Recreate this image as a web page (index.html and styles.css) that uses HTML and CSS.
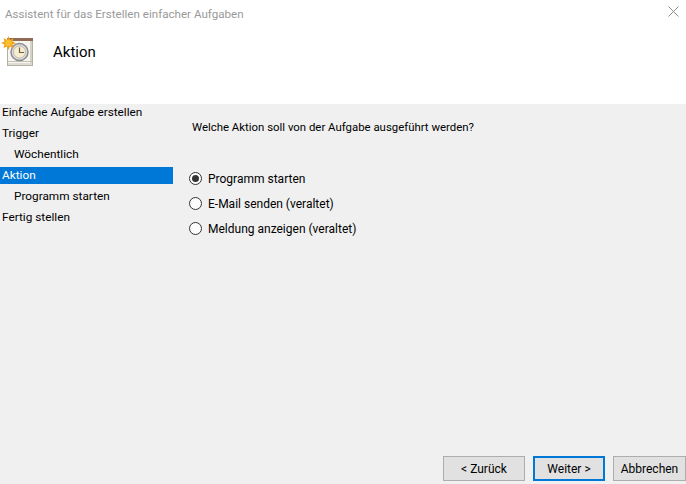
FILE: index.html
```html
<!DOCTYPE html>
<html lang="de">
<head>
    <meta charset="UTF-8">
    <title>Assistent für das Erstellen einfacher Aufgaben</title>
    <link rel="stylesheet" href="styles.css">
</head>
<body>
    <div class="wizard">
        <header class="wizard-header">
            <div class="title-bar">
                <span class="title-text">Assistent für das Erstellen einfacher Aufgaben</span>
                <svg class="close-icon" width="11" height="11" viewBox="0 0 11 11">
                    <path d="M0.5 0.5L10.5 10.5M10.5 0.5L0.5 10.5" stroke="#8c8c8c" stroke-width="1" fill="none"/>
                </svg>
            </div>
            <div class="page-heading">
                <svg class="task-icon" width="34" height="32" viewBox="0 0 34 32">
                    <!-- calendar page -->
                    <rect x="7.5" y="2.5" width="25" height="27" fill="#f7f5f0" stroke="#b5b0a4"/>
                    <rect x="7" y="2" width="26" height="3" fill="#8f6b57"/>
                    <rect x="30" y="5" width="2" height="24" fill="#d6d2c8"/>
                    <rect x="8" y="25" width="24" height="1" fill="#c4c0b6"/>
                    <rect x="8" y="27" width="24" height="2" fill="#dedbd3"/>
                    <!-- clock -->
                    <circle cx="19.5" cy="16" r="8.5" fill="#dcdcdc" stroke="#8d8d8d" stroke-width="1.5"/>
                    <circle cx="19.5" cy="16" r="6" fill="#f8eecb" stroke="#a5a5a5" stroke-width="0.6"/>
                    <path d="M19.5 11.5V16.5H24" stroke="#66625a" stroke-width="1.2" fill="none"/>
                    <!-- sun -->
                    <path d="M8.5 0L10 4L13.5 2L12.5 5.5L16 7L12.5 8.5L13.5 12L10 10.5L8.5 14L7 10.5L3.5 12L4.5 8.5L1 7L4.5 5.5L3.5 2L7 4Z" fill="#f3a01a"/>
                    <circle cx="8.5" cy="7" r="3.2" fill="#fbc02d"/>
                </svg>
                <h1 class="page-title">Aktion</h1>
            </div>
        </header>

        <div class="wizard-body">
            <nav class="step-list">
                <div class="step">Einfache Aufgabe erstellen</div>
                <div class="step">Trigger</div>
                <div class="step sub">Wöchentlich</div>
                <div class="step active">Aktion</div>
                <div class="step sub">Programm starten</div>
                <div class="step">Fertig stellen</div>
            </nav>
            <main class="step-content">
                <p class="question">Welche Aktion soll von der Aufgabe ausgeführt werden?</p>
                <div class="radio-group">
                    <label class="radio-row"><span class="radio checked"></span>Programm starten</label>
                    <label class="radio-row"><span class="radio"></span>E-Mail senden (veraltet)</label>
                    <label class="radio-row"><span class="radio"></span>Meldung anzeigen (veraltet)</label>
                </div>
            </main>
        </div>

        <footer class="wizard-footer">
            <button class="btn btn-back">&lt; Zurück</button>
            <button class="btn btn-next">Weiter &gt;</button>
            <button class="btn btn-cancel">Abbrechen</button>
        </footer>
    </div>
</body>
</html>
```

FILE: styles.css
```css
* {
    box-sizing: border-box;
    margin: 0;
    padding: 0;
}

body {
    font-family: "Roboto", "Open Sans", sans-serif;
    font-size: 12px;
    color: #000;
    background-color: #f0f0f0;
    width: 686px;
    height: 484px;
    overflow: hidden;
}

.wizard {
    height: 484px;
    display: flex;
    flex-direction: column;
}

.wizard-header {
    height: 104px;
    background-color: #fff;
    flex-shrink: 0;
}

.title-bar {
    display: flex;
    justify-content: space-between;
    align-items: center;
    height: 28px;
    padding: 0 6px 1px 5px;
}

.title-text {
    color: #999;
    font-size: 11.6px;
}

.close-icon {
    margin-right: 1px;
    margin-top: -4px;
}

.page-heading {
    display: flex;
    align-items: center;
    height: 48px;
}

.task-icon {
    flex-shrink: 0;
}

.page-title {
    font-size: 15px;
    font-weight: normal;
    margin-left: 19px;
}

.wizard-body {
    flex: 1;
    display: flex;
}

.step-list {
    width: 173px;
    display: flex;
    flex-direction: column;
    gap: 4px;
    flex-shrink: 0;
}

.step {
    height: 17px;
    line-height: 17px;
    padding-left: 2px;
    white-space: nowrap;
    font-size: 11.8px;
}

.step.sub {
    padding-left: 14px;
}

.step.active {
    background-color: #0078d7;
    color: #fff;
}

.step-content {
    padding: 15px 0 0 16px;
}

.question {
    line-height: 17px;
    padding-left: 3px;
    margin-bottom: 34px;
    font-size: 11.4px;
}

.radio-group {
    display: flex;
    flex-direction: column;
    gap: 8px;
}

.radio-row {
    display: flex;
    align-items: center;
    height: 17px;
}

.radio {
    width: 13px;
    height: 13px;
    border: 1px solid #333;
    border-radius: 50%;
    background-color: #fff;
    margin-right: 6px;
    display: flex;
    align-items: center;
    justify-content: center;
}

.radio.checked::after {
    content: "";
    width: 7px;
    height: 7px;
    border-radius: 50%;
    background-color: #333;
}

.wizard-footer {
    display: flex;
    justify-content: flex-end;
    gap: 8px;
    padding-bottom: 3px;
}

.btn {
    height: 25px;
    font-family: inherit;
    font-size: 12px;
    color: #000;
    background-color: #e1e1e1;
    border: 1px solid #adadad;
}

.btn-back {
    width: 82px;
}

.btn-next {
    width: 72px;
    border: 2px solid #0078d7;
}

.btn-cancel {
    width: 73px;
}
```
